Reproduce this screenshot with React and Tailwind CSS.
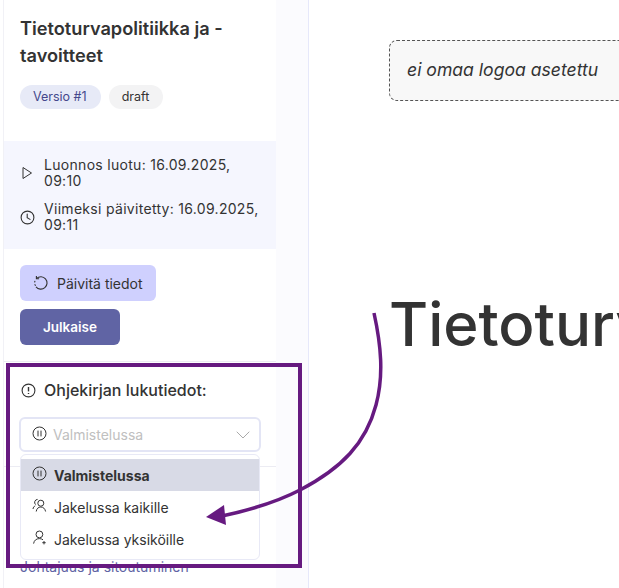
import React from "react";
import { ChevronDown } from "lucide-react";

function PlayIcon() {
  return (
    <svg width="14" height="14" viewBox="0 0 14 14" fill="none" stroke="#333" strokeWidth="1" className="shrink-0">
      <path d="M3 1.5V12.5L11.5 7Z" strokeLinejoin="round" />
    </svg>
  );
}

function ClockIcon() {
  return (
    <svg width="15" height="15" viewBox="0 0 15 15" fill="none" stroke="#333" strokeWidth="1.1" className="shrink-0">
      <circle cx="7.5" cy="7.5" r="6.4" />
      <path d="M7.2 4V7.6L10 9.4" strokeLinecap="round" />
    </svg>
  );
}

function AlertIcon() {
  return (
    <svg width="15" height="15" viewBox="0 0 15 15" fill="none" stroke="#333" strokeWidth="1.1" className="shrink-0">
      <circle cx="7.5" cy="7.5" r="6.4" />
      <path d="M7.5 4V8.4" strokeWidth="1.4" />
      <path d="M7.5 10V11" strokeWidth="1.4" />
    </svg>
  );
}

function PauseIcon() {
  return (
    <svg width="15" height="15" viewBox="0 0 15 15" fill="none" stroke="#333" strokeWidth="1" className="shrink-0">
      <circle cx="7.5" cy="7.5" r="6.5" />
      <path d="M6 5V10M9 5V10" strokeLinecap="round" />
    </svg>
  );
}

function RefreshIcon() {
  return (
    <svg width="16" height="16" viewBox="0 0 16 16" fill="none" stroke="#333" strokeWidth="1.1" className="shrink-0">
      <path d="M3.6 3.4A6.2 6.2 0 1 1 3 11.8" />
      <path d="M2 9.6L2.3 10.4M1.7 7L1.9 6.2" strokeLinecap="round" />
      <path d="M3.4 1V3.7H6.1" />
    </svg>
  );
}

function UsersIcon() {
  return (
    <svg width="15" height="15" viewBox="0 0 15 15" fill="none" stroke="#333" strokeWidth="1" className="shrink-0">
      <circle cx="8.8" cy="5.2" r="3" />
      <path d="M4.2 13.5C4.6 10.6 6.4 9 8.8 9C11.2 9 13 10.6 13.6 13.5" />
      <path d="M5.6 1.4A3 3 0 0 0 3.6 6.6M1 11C1.2 9.4 2 8.4 3.2 7.8" />
    </svg>
  );
}

function UserPlusIcon() {
  return (
    <svg width="15" height="15" viewBox="0 0 15 15" fill="none" stroke="#333" strokeWidth="1" className="shrink-0">
      <circle cx="7.4" cy="4.4" r="3.4" />
      <path d="M1.6 13.6C2 10.4 4.4 8.6 7.4 8.6C8.8 8.6 10 9 11 9.8" />
      <path d="M12 11V14.4M10.3 12.7H13.7" />
    </svg>
  );
}

function MenuRow({ icon, label, active }) {
  return (
    <div
      className={
        "h-8 flex items-center gap-[7px] pl-[11px] text-[14px] text-[#333] " +
        (active ? "bg-[#d8dae6] font-bold" : "")
      }
    >
      <span className="-mt-[3px]">{icon}</span>
      <span>{label}</span>
    </div>
  );
}

export default function App() {
  return (
    <div className="relative flex h-[588px] w-[619px] overflow-hidden bg-white font-['Inter',sans-serif] text-[#333]">
      <aside className="ml-[3px] flex w-[306px] shrink-0 border-r border-[#e6e8fa]">
        <div className="w-[273px] shrink-0 border-l border-[#f1f1f6]">
          <div className="px-4 pt-[15px]">
            <h2 className="text-[18.2px] font-semibold leading-[27px]">Tietoturvapolitiikka ja -tavoitteet</h2>
            <div className="mt-[16px] flex gap-2 text-[12.5px] leading-6">
              <span className="rounded-full bg-[#e7eaf7] pl-[13px] pr-[14px] text-[#45488c]">Versio #1</span>
              <span className="rounded-full bg-[#f3f3f4] pl-[13px] pr-[14px]">draft</span>
            </div>
          </div>

          <div className="mt-8 flex h-[108px] flex-col gap-[12px] bg-[#f5f6fe] pl-4 pt-[16px] text-[14px] leading-4">
            <div className="flex items-center gap-[10px]">
              <PlayIcon />
              <span className="w-[215px] tracking-[0.3px]">Luonnos luotu: 16.09.2025, 09:10</span>
            </div>
            <div className="flex items-center gap-[9px]">
              <ClockIcon />
              <span className="w-[220px] tracking-[0.3px]">Viimeksi päivitetty: 16.09.2025, 09:11</span>
            </div>
          </div>

          <div className="border-b border-[#ececf3] px-4 pb-4 pt-4">
            <button className="flex h-9 w-[136px] items-center gap-[8px] rounded-md bg-[#cfd0fe] pl-[13px] text-[14px]">
              <RefreshIcon />
              Päivitä tiedot
            </button>
            <button className="mt-2 block h-9 w-[100px] rounded-md bg-[#6064a4] text-center text-[13.5px] font-semibold text-white">
              Julkaise
            </button>
          </div>

          <div className="px-4 pt-[16px]">
            <div className="flex items-center gap-[8px] pl-[1px] text-[16px] font-medium leading-6">
              <AlertIcon />
              Ohjekirjan lukutiedot:
            </div>
            <div className="mt-[15px] flex h-[35px] w-[242px] -translate-x-px items-center rounded-md border-2 border-[#e3e5f5] pl-[11px] pr-[11px] text-[14px] text-[#c0c0c0]">
              <span className="-mt-[3px]"><PauseIcon /></span>
              <span className="ml-[6px] flex-1">Valmistelussa</span>
              <ChevronDown size={24} strokeWidth={1} color="#aaa" className="-mr-[7px]" />
            </div>
            <div className="mt-[14px] border-t border-[#ececf3] -mx-4" />
            <div className="mt-[90px] text-[14px] leading-5 text-[#6064a4]">Johtajuus ja sitoutuminen</div>
          </div>
        </div>
        <div className="flex-1 bg-[#fbfbfe]" />
      </aside>

      <main className="min-w-0 flex-1 pl-[80px] pt-[40px]">
        <div className="flex h-[61px] w-[400px] items-center rounded-lg border border-dashed border-[#555] bg-[#f8f8f8] pl-[17px] text-[17.6px] italic">
          ei omaa logoa asetettu
        </div>
        <h1 className="mt-[187px] whitespace-nowrap text-[60px] font-medium leading-[72px]">Tietoturvapolitiikka</h1>
      </main>

      <div className="absolute left-[20px] top-[454px] w-[240px] rounded-md border border-[#e8e9f6] bg-white py-1">
        <MenuRow icon={<PauseIcon />} label="Valmistelussa" active />
        <MenuRow icon={<UsersIcon />} label="Jakelussa kaikille" />
        <MenuRow icon={<UserPlusIcon />} label="Jakelussa yksiköille" />
      </div>

      <div className="pointer-events-none absolute left-[6px] top-[363px] h-[205px] w-[296px] border-4 border-[#661a80]" />

      <svg className="pointer-events-none absolute left-0 top-0" width="619" height="588" fill="none">
        <path
          d="M374 313C381 345 384 375 376 405C366 443 342 468 300 490C275 503 250 510 222 516"
          stroke="#661a80"
          strokeWidth="3.5"
        />
        <path d="M206 517L224 505L226 525Z" fill="#661a80" />
      </svg>
    </div>
  );
}
